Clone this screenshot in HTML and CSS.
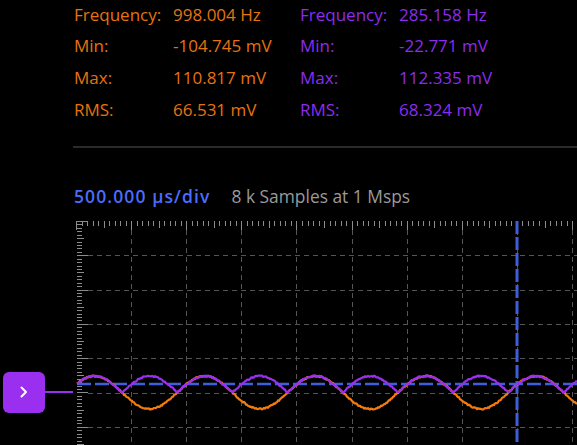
FILE: index.html
```html
<!DOCTYPE html>
<html>
<head>
<meta charset="utf-8">
<link rel="stylesheet" href="styles.css">
</head>
<body>
<div class="stats">
  <span class="ch1">Frequency:</span><span class="ch1">998.004 Hz</span><span class="ch2">Frequency:</span><span class="ch2">285.158 Hz</span>
  <span class="ch1">Min:</span><span class="ch1">-104.745 mV</span><span class="ch2">Min:</span><span class="ch2">-22.771 mV</span>
  <span class="ch1">Max:</span><span class="ch1">110.817 mV</span><span class="ch2">Max:</span><span class="ch2">112.335 mV</span>
  <span class="ch1">RMS:</span><span class="ch1">66.531 mV</span><span class="ch2">RMS:</span><span class="ch2">68.324 mV</span>
</div>
<div class="divider"></div>
<div class="timebar">
  <span class="tdiv">500.000 µs/div</span>
  <span class="samples">8 k Samples at 1 Msps</span>
</div>
<div class="scope">
  <div class="marker">
    <div class="marker-box">
      <svg class="chev" width="10" height="14" viewBox="0 0 10 14"><path d="M2.5 2.5 L7 7 L2.5 11.5" fill="none" stroke="#fff" stroke-width="2" stroke-linecap="round" stroke-linejoin="round"/></svg>
    </div>
    <div class="marker-line"></div>
  </div>
  <svg class="plot" id="plot" width="501" height="224" viewBox="0 0 501 224"></svg>
</div>
<script src="script.js"></script>
</body>
</html>
```
FILE: styles.css
```css
html, body {
  margin: 0;
  padding: 0;
  background: #000;
}
body {
  font-family: "Open Sans", "Noto Sans", sans-serif;
  font-size: 17px;
  width: 577px;
  height: 445px;
  overflow: hidden;
}
.stats {
  display: grid;
  grid-template-columns: 99px 127px 99px auto;
  margin: -1.4px 0 0 74px;
  line-height: 31.67px;
  white-space: nowrap;
}
.ch1 { color: #e5730f; }
.ch2 { color: #8c2cf0; }
.divider {
  height: 2px;
  background: #2a2a2a;
  margin: 20.7px 0 0 73px;
}
.timebar {
  display: flex;
  gap: 21px;
  margin-top: 36.4px;
  padding-left: 74px;
  line-height: 24px;
  white-space: nowrap;
}
.tdiv {
  color: #4a6cff;
  font-size: 17.5px;
  font-weight: 600;
  letter-spacing: 1.1px;
}
.samples {
  color: #9a9a9a;
  font-size: 17.4px;
}
.scope {
  position: relative;
  margin-top: 12.6px;
  height: 224px;
}
.plot {
  display: block;
  margin-left: 76px;
}
.marker {
  position: absolute;
  left: 3px;
  top: 151px;
  display: flex;
  align-items: center;
}
.marker-box {
  width: 42px;
  height: 41px;
  border-radius: 6px;
  background: #9a2ff0;
  display: flex;
  align-items: center;
  justify-content: center;
}
.chev { display: block; }
.marker-line {
  width: 28px;
  height: 2px;
  background: #9a2ff0;
}
```
FILE: script.js
```js
(function () {
  var svg = document.getElementById('plot');
  var W = 501, H = 224;
  var dx = 55.12, dy = 34.3;
  var out = [];
  // dashed grid
  for (var k = 1; k <= 9; k++) {
    var x = Math.round(k * dx) + 0.5;
    out.push('<line x1="' + x + '" y1="9" x2="' + x + '" y2="' + H + '" stroke="#555" stroke-width="1" stroke-dasharray="5 4" shape-rendering="crispEdges"/>');
  }
  for (var j = 1; j <= 6; j++) {
    var y = Math.round(j * dy) + 0.5;
    out.push('<line x1="12" y1="' + y + '" x2="' + W + '" y2="' + y + '" stroke="#555" stroke-width="1" stroke-dasharray="5 4" shape-rendering="crispEdges"/>');
  }
  // top ruler
  for (var i = 0; i * dx / 10 < W; i++) {
    var tx = Math.round(i * dx / 10) + 0.5;
    var len = (i % 10 === 0) ? 9 : (i % 5 === 0 ? 6.5 : 4.5);
    out.push('<line x1="' + tx + '" y1="0" x2="' + tx + '" y2="' + len + '" stroke="#8c8c8c" stroke-width="1" shape-rendering="crispEdges"/>');
  }
  // left ruler
  for (var m = 0; m * dy / 10 < H; m++) {
    var ty = Math.round(m * dy / 10) + 0.5;
    var l2 = (m % 10 === 0) ? 12 : (m % 5 === 0 ? 8 : 5.5);
    out.push('<line x1="1" y1="' + ty + '" x2="' + l2 + '" y2="' + ty + '" stroke="#8c8c8c" stroke-width="1" shape-rendering="crispEdges"/>');
  }
  // trigger lines
  out.push('<line x1="' + W + '" y1="163" x2="0" y2="163" stroke="#3d5fd9" stroke-width="2.5" stroke-dasharray="14 4"/>');
  out.push('<line x1="441" y1="0" x2="441" y2="' + H + '" stroke="#3d5fd9" stroke-width="3" stroke-dasharray="13 3"/>');
  // traces
  var seed = 12345;
  function rnd() { seed = (seed * 1103515245 + 12345) % 2147483648; return seed / 2147483648 - 0.5; }
  var P = 110.4, x0 = -9.2, c = 171.5, A = 16.5;
  var o = [], p = [];
  for (var X = 1; X <= W; X += 1) {
    var s = Math.sin(2 * Math.PI * (X - x0) / P);
    var yo = c - A * s + rnd() * 1.4;
    var yp = c - A * Math.abs(s) + rnd() * 1.4;
    o.push((X === 1 ? 'M' : 'L') + X + ' ' + yo.toFixed(2));
    p.push((X === 1 ? 'M' : 'L') + X + ' ' + yp.toFixed(2));
  }
  out.push('<path d="' + o.join(' ') + '" fill="none" stroke="#f57c0c" stroke-width="2.2" stroke-linejoin="round"/>');
  out.push('<path d="' + p.join(' ') + '" fill="none" stroke="#9a2ff0" stroke-width="2.2" stroke-linejoin="round"/>');
  svg.innerHTML = out.join('');
})();
```
